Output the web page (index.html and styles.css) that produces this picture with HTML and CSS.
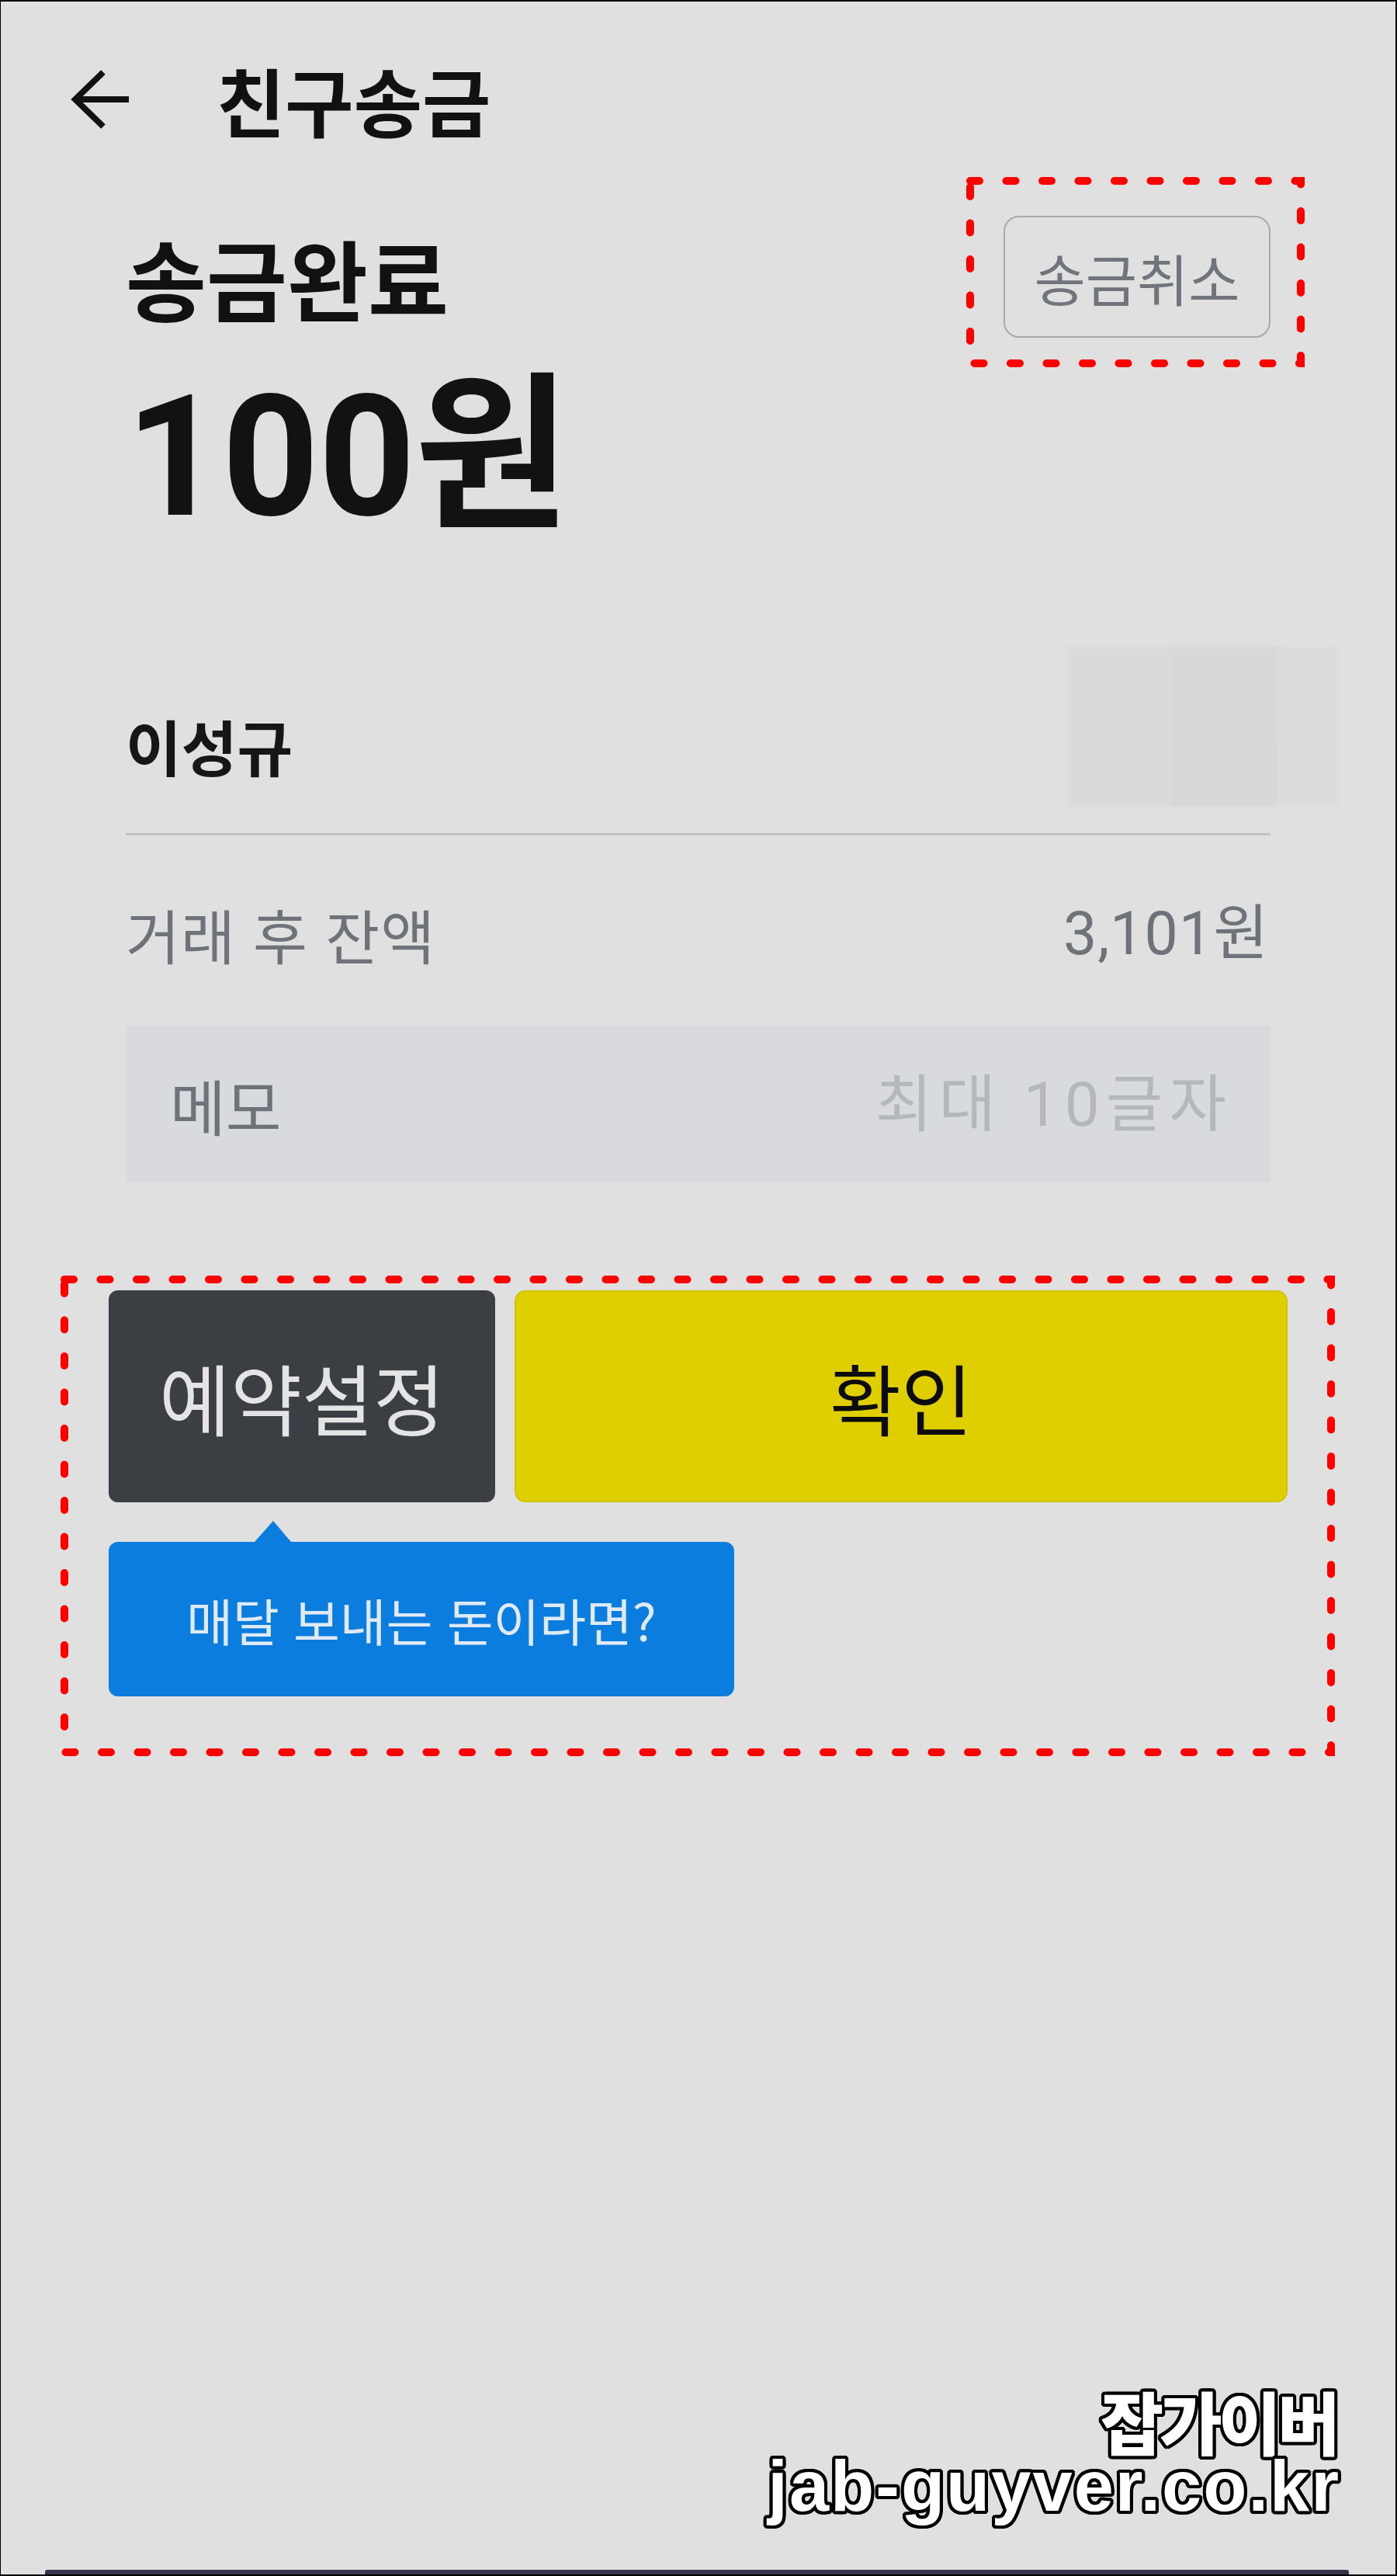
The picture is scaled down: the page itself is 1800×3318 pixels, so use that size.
FILE: index.html
```html
<!DOCTYPE html>
<html lang="ko">
<head>
    <meta charset="UTF-8">
    <meta name="viewport" content="width=device-width, initial-scale=1.0">
    <title>친구송금</title>
    <link rel="stylesheet" href="styles.css">
</head>
<body>
    <div class="screen">
        <header class="topbar">
            <svg class="back-icon" width="76" height="76" viewBox="0 0 76 76">
                <path d="M75 38H7 M42 3L6 38L42 73" fill="none" stroke="#111" stroke-width="8" stroke-linejoin="miter"/>
            </svg>
            <h1 class="topbar-title">친구송금</h1>
        </header>

        <main class="content">
            <div class="result-head">
                <h2 class="result-title">송금완료</h2>
                <button class="cancel-btn">송금취소</button>
            </div>

            <div class="amount">100원</div>

            <div class="recipient">
                <span class="recipient-name">이성규</span>
                <div class="recipient-photo">
                    <span class="photo-a"></span>
                    <span class="photo-b"></span>
                    <span class="photo-c"></span>
                </div>
            </div>

            <hr class="divider">

            <div class="balance">
                <span class="balance-label">거래 후 잔액</span>
                <span class="balance-value">3,101원</span>
            </div>

            <div class="memo">
                <span class="memo-label">메모</span>
                <span class="memo-hint">최대 10글자</span>
            </div>

            <div class="actions">
                <button class="btn-reserve">예약설정</button>
                <button class="btn-ok">확인</button>
            </div>

            <div class="tip">매달 보내는 돈이라면?</div>
        </main>

        <div class="watermark">
            <div class="watermark-ko">잡가이버</div>
            <div class="watermark-en">jab-guyver.co.kr</div>
        </div>

        <div class="home-bar"></div>

        <!-- 빨간 점선 표시 -->
        <svg class="mark mark-cancel" width="436" height="245">
            <rect x="5" y="5" width="426" height="235"/>
        </svg>
        <svg class="mark mark-actions" width="1642" height="619">
            <rect x="5" y="5" width="1632" height="609"/>
        </svg>
    </div>
</body>
</html>
```

FILE: styles.css
```css
html, body {
    margin: 0;
    background-color: #000;
}

body {
    font-family: "Noto Sans CJK KR", "Noto Sans", sans-serif;
    color: #111;
}

button {
    font: inherit;
    margin: 0;
    padding: 0;
    cursor: pointer;
}

.screen {
    position: relative;
    margin: 2px 2px 0 1px;
    height: 3314px;
    background-color: #e0e0e0;
    display: flex;
    flex-direction: column;
    overflow: hidden;
}

/* 상단 바 */
.topbar {
    display: flex;
    align-items: center;
    padding: 78px 0 0 90px;
    height: 96px;
}

.back-icon {
    flex-shrink: 0;
}

.topbar-title {
    margin: 0 0 0 112px;
    font-size: 96px;
    line-height: 96px;
    font-weight: 700;
}

.content {
    padding: 0 161px;
    display: flex;
    flex-direction: column;
}

.result-head {
    margin-top: 102px;
    display: flex;
    justify-content: space-between;
    align-items: center;
}

.result-title {
    margin: 0;
    font-size: 113px;
    line-height: 113px;
    font-weight: 700;
}

.cancel-btn {
    width: 344px;
    height: 157px;
    border: 2px solid #a6a9ad;
    border-radius: 20px;
    background-color: transparent;
    color: #6f757b;
    font-size: 72px;
    line-height: 1;
}

.amount {
    margin-top: 45px;
    font-family: Roboto, "Noto Sans CJK KR", sans-serif;
    font-size: 218px;
    line-height: 218px;
    font-weight: 700;
    color: #121212;
    letter-spacing: -1px;
}

.recipient {
    margin-top: 134px;
    height: 207px;
    display: flex;
    justify-content: space-between;
    align-items: flex-start;
}

.recipient-name {
    margin-top: 89px;
    font-size: 78px;
    line-height: 78px;
    font-weight: 700;
    color: #161616;
}

.recipient-photo {
    width: 348px;
    height: 207px;
    margin-right: -87px;
    display: flex;
    filter: blur(2px);
}

.photo-a {
    width: 134px;
    background: linear-gradient(#dadada, #dadadc);
}

.photo-b {
    width: 136px;
    background: linear-gradient(#d8d8d8 62%, #d7d7d9 63%);
}

.photo-c {
    width: 78px;
    background-color: #dddcdd;
}

.divider {
    margin: 34px 0 0;
    height: 3px;
    border: 0;
    background-color: #c2c2c3;
}

.balance {
    margin-top: 89px;
    display: flex;
    justify-content: space-between;
    font-size: 76px;
    line-height: 76px;
    color: #6e7379;
}

.balance-label {
    letter-spacing: 1px;
}

.balance-value {
    font-family: Roboto, "Noto Sans CJK KR", sans-serif;
    font-size: 77px;
    letter-spacing: 1px;
    margin-right: 2px;
}

.memo {
    margin-top: 81px;
    height: 201px;
    padding: 0 57px;
    background-color: #d9dadd;
    display: flex;
    justify-content: space-between;
    align-items: center;
    font-size: 78px;
    line-height: 78px;
}

.memo-label {
    color: #6e7379;
}

.memo-hint {
    font-family: Roboto, "Noto Sans CJK KR", sans-serif;
    color: #b4b7bb;
    font-size: 80px;
    letter-spacing: 8px;
    margin-right: -8px;
}

.actions {
    margin: 139px -22px 0;
    display: flex;
    gap: 25px;
    height: 273px;
}

.btn-reserve {
    width: 498px;
    border: 0;
    border-radius: 12px;
    background-color: #3b3f44;
    color: #e4e4e4;
    font-size: 100px;
    line-height: 1;
}

.btn-ok {
    flex: 1;
    border: 2px solid #d3c400;
    border-radius: 14px;
    background-color: #dfcf00;
    color: #0c0c0c;
    font-size: 100px;
    line-height: 1;
}

.tip {
    position: relative;
    margin: 51px 0 0 -22px;
    width: 806px;
    height: 199px;
    border-radius: 12px;
    background-color: #0a7ddf;
    color: #dfeaf6;
    font-size: 65px;
    display: flex;
    align-items: center;
    justify-content: center;
}

.tip::before {
    content: "";
    position: absolute;
    top: -27px;
    left: 188px;
    border-left: 24px solid transparent;
    border-right: 23px solid transparent;
    border-bottom: 27px solid #0a7ddf;
}

/* 워터마크 */
.watermark {
    margin-top: auto;
    padding-right: 71px;
    text-align: right;
    color: #fff;
    text-shadow:
        4px 0 0 #000, -4px 0 0 #000, 0 4px 0 #000, 0 -4px 0 #000,
        3px 3px 0 #000, -3px 3px 0 #000, 3px -3px 0 #000, -3px -3px 0 #000,
        4px 2px 0 #000, -4px 2px 0 #000, 4px -2px 0 #000, -4px -2px 0 #000,
        2px 4px 0 #000, -2px 4px 0 #000, 2px -4px 0 #000, -2px -4px 0 #000;
}

.watermark-ko {
    font-size: 88px;
    line-height: 80px;
    font-weight: 900;
    letter-spacing: -5px;
    margin-right: 5px;
}

.watermark-en {
    font-family: "Liberation Sans", Arial, sans-serif;
    font-size: 92px;
    line-height: 90px;
    font-weight: 700;
    letter-spacing: 2px;
}

.home-bar {
    margin: 63px 60px 0 57px;
    height: 6px;
    border-radius: 3px 3px 0 0;
    background-color: #35344c;
}

/* 빨간 점선 */
.mark {
    position: absolute;
    fill: none;
    stroke: #ff0000;
    stroke-width: 10;
    stroke-linecap: round;
    stroke-dasharray: 12 34.5;
}

.mark-cancel {
    left: 1244px;
    top: 226px;
}

.mark-actions {
    left: 77px;
    top: 1641px;
}
```
